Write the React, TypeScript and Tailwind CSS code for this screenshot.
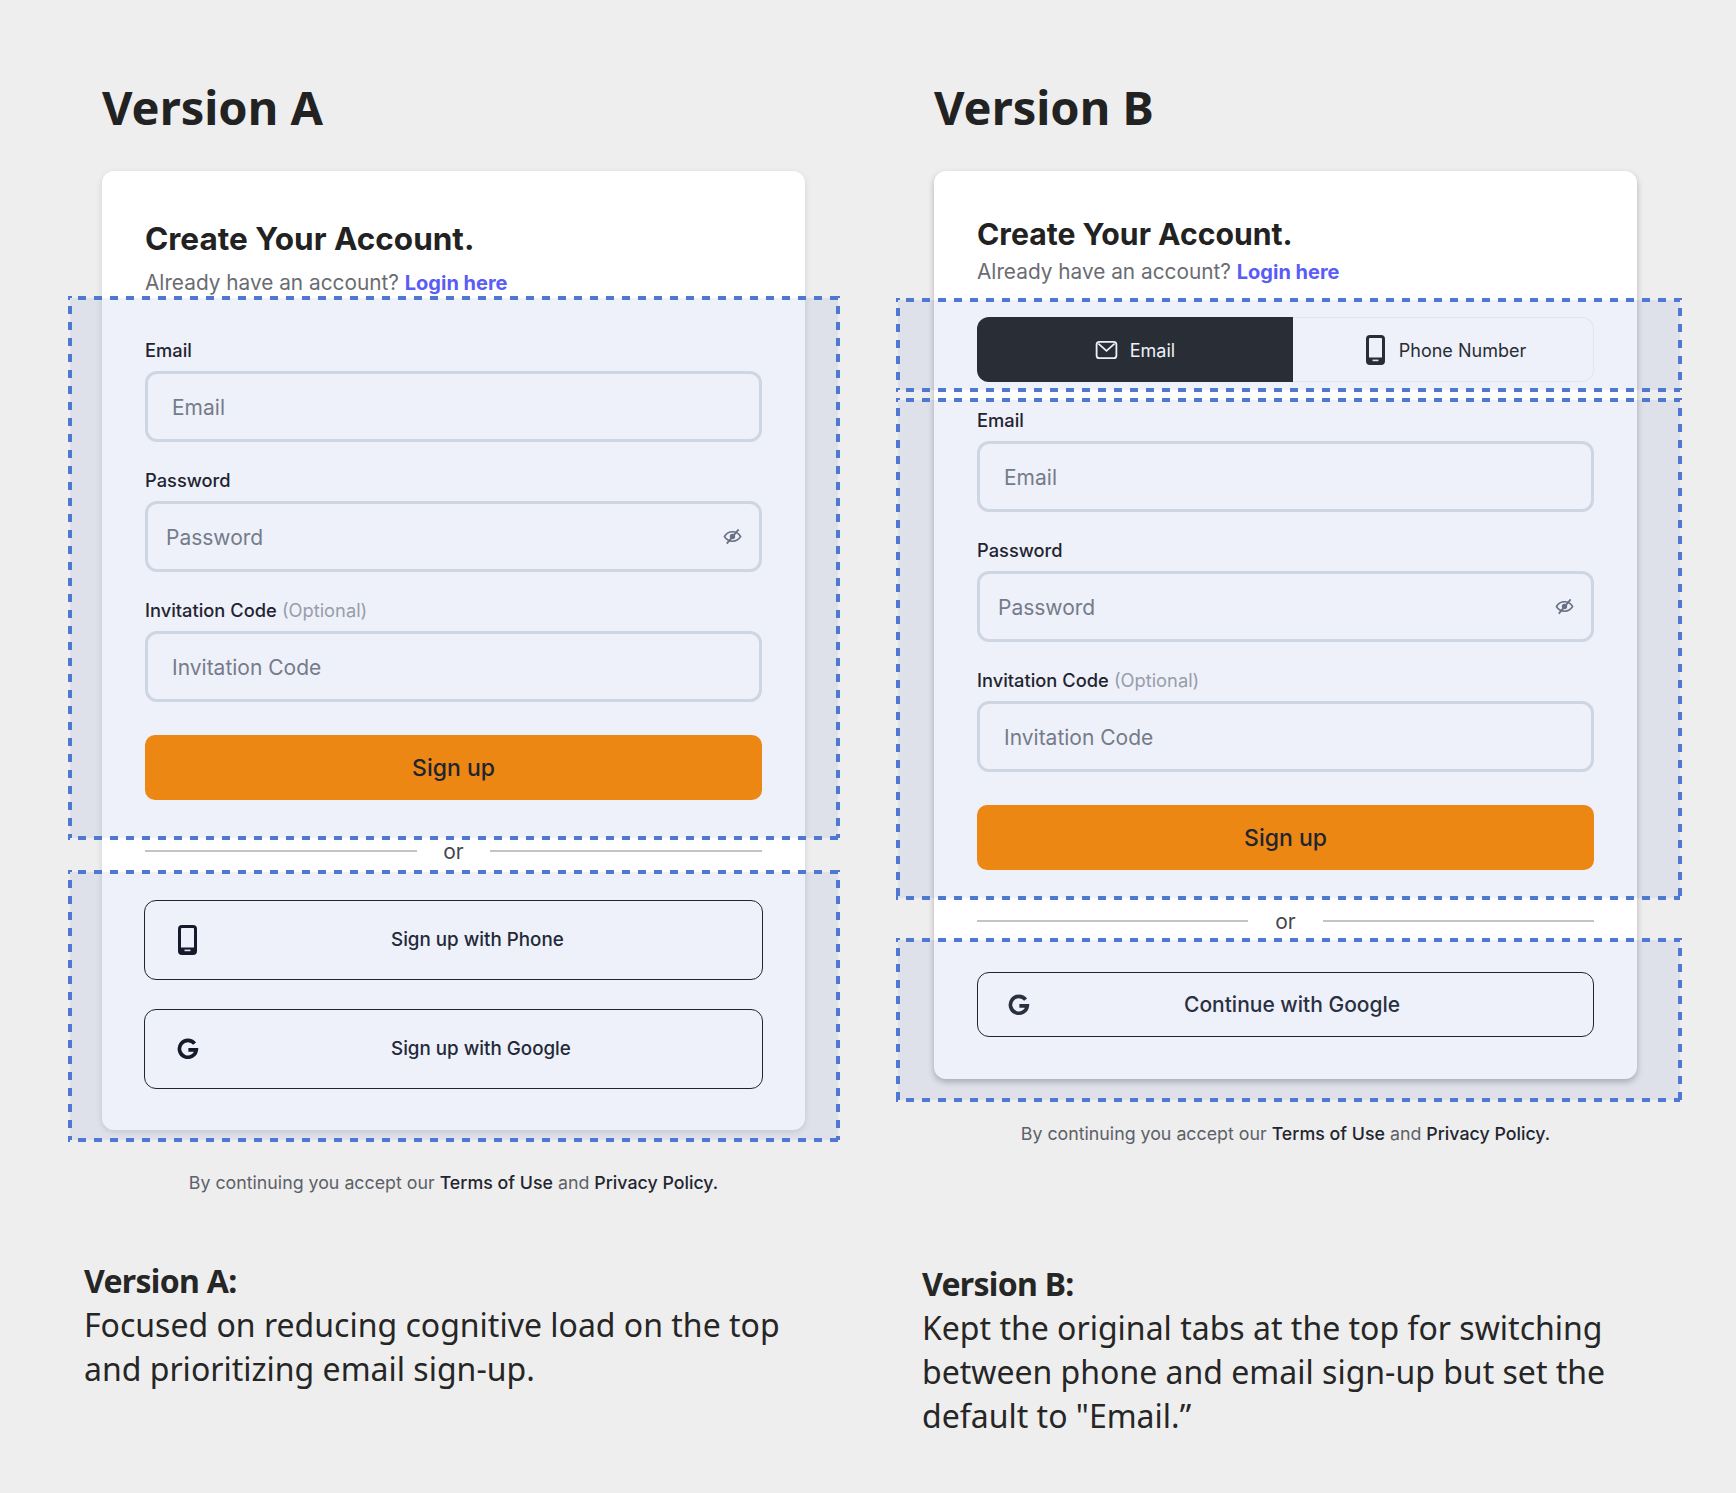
import React from 'react';

function Highlight({ className }: { className: string }) {
  return (
    <div className={`absolute pointer-events-none bg-[#2a4fb4]/[0.08] ${className}`}>
      <svg className="absolute inset-0 w-full h-full overflow-visible" stroke="#5078d2" strokeWidth="4" strokeDasharray="8 8" strokeDashoffset="6">
        <line x1="-2" y1="0" x2="100%" y2="0" />
        <line x1="-2" y1="100%" x2="100%" y2="100%" />
        <line x1="0" y1="-2" x2="0" y2="100%" />
        <line x1="100%" y1="-2" x2="100%" y2="100%" />
      </svg>
    </div>
  );
}

function PhoneIcon({ className }: { className?: string }) {
  return (
    <svg viewBox="0 0 19 30" className={className} fill="none">
      <rect x="1.5" y="1.5" width="16" height="27" rx="2.5" stroke="currentColor" strokeWidth="3" />
      <rect x="1.5" y="22.5" width="16" height="6" fill="currentColor" />
      <rect x="6.5" y="24.6" width="6" height="1.6" fill="#eef1f9" />
    </svg>
  );
}

function GoogleIcon({ className }: { className?: string }) {
  return (
    <svg viewBox="0 0 24 24" className={className} fill="none">
      <path d="M19.2 6.2A9.2 9.2 0 1 0 21 13H12.4" stroke="currentColor" strokeWidth="4" />
    </svg>
  );
}

function EyeOffIcon() {
  return (
    <svg viewBox="0 0 20 20" className="w-[19px] h-[19px] text-[#6f7380]" fill="none" stroke="currentColor">
      <path d="M1.5 10C3.5 6.8 6.5 5 10 5s6.5 1.8 8.5 5c-2 3.2-5 5-8.5 5s-6.5-1.8-8.5-5Z" strokeWidth="1.6" />
      <circle cx="10" cy="10" r="2.8" fill="currentColor" stroke="none" />
      <path d="M4 17.5 16.5 2.5" strokeWidth="1.8" />
    </svg>
  );
}

function MailIcon() {
  return (
    <svg viewBox="0 0 24 20" className="w-[23px] h-[18px]" fill="none" stroke="currentColor" strokeWidth="2">
      <rect x="1" y="1" width="22" height="18" rx="3" />
      <path d="M3 3l9 8 9-8" />
    </svg>
  );
}

function Field({ label, optional, placeholder, eye }: { label: string; optional?: boolean; placeholder: string; eye?: boolean }) {
  return (
    <div>
      <div className="text-[18.3px] leading-[22px] text-[#1f2126] font-medium">
        {label}
        {optional && <span className="text-[#a2a4ab] font-normal"> (Optional)</span>}
      </div>
      <div className={`mt-[10px] h-[71px] border-[3px] border-[#dde1e8] rounded-[12px] flex items-center justify-between text-[21px] text-[#7c7f88] ${eye ? 'pl-[18px] pr-[17px]' : 'pl-[24px]'}`}>
        <span className="pt-[2px]">{placeholder}</span>
        {eye && <EyeOffIcon />}
      </div>
    </div>
  );
}

function Form() {
  return (
    <>
      <div className="flex flex-col gap-[27px]">
        <Field label="Email" placeholder="Email" />
        <Field label="Password" placeholder="Password" eye />
        <Field label="Invitation Code" optional placeholder="Invitation Code" />
      </div>
      <div className="mt-[33px] h-[65px] pt-[1px] rounded-[10px] bg-[#fe8d07] flex items-center justify-center text-[23px] font-medium text-[#1f2126]">
        Sign up
      </div>
    </>
  );
}

function Divider({ gap }: { gap: string }) {
  return (
    <div className="flex items-center h-[22px]">
      <div className="flex-1 h-[2px] bg-[#c4c4c4] -mt-[2px]" />
      <div className={`text-center text-[21px] leading-[22px] text-[#44474e] ${gap}`}>or</div>
      <div className="flex-1 h-[2px] bg-[#c4c4c4] -mt-[2px]" />
    </div>
  );
}

function Footer({ className }: { className: string }) {
  return (
    <p className={`text-[17.8px] leading-[24px] text-[#5d6068] text-center ${className}`}>
      By continuing you accept our <span className="text-[#23262e] font-medium">Terms of Use</span> and{' '}
      <span className="text-[#23262e] font-medium">Privacy Policy.</span>
    </p>
  );
}

function Heading({ pt, gap, size }: { pt: string; gap: string; size: string }) {
  return (
    <div className={pt}>
      <h2 className={`${size} leading-[42px] font-bold text-[#222222]`}>Create Your Account.</h2>
      <p className={`${gap} text-[20.8px] leading-[28px] text-[#6a6c72]`}>
        Already have an account? <span className="text-[20px] text-[#5a5cf5] font-bold">Login here</span>
      </p>
    </div>
  );
}

function Summary({ title, lines, className }: { title: string; lines: string[]; className: string }) {
  return (
    <div className={`font-['Noto_Sans',sans-serif] text-[32px] leading-[44px] text-[#262626] ${className}`}>
      <div className="font-bold tracking-[-0.7px]">{title}</div>
      {lines.map((l) => (
        <div key={l}>{l}</div>
      ))}
    </div>
  );
}

export default function App() {
  return (
    <div className="w-[1736px] h-[1493px] bg-[#eeeeee] flex font-['Inter',sans-serif] overflow-hidden">
      {/* Version A */}
      <div className="w-[832px] pl-[102px] flex flex-col">
        <h1 className="mt-[74px] h-[66px] font-['Noto_Sans',sans-serif] font-bold text-[47px] leading-[66px] text-[#222222]">Version A</h1>
        <div className="relative mt-[31px] w-[703px] h-[959px] bg-white rounded-[12px] shadow-[0_2px_6px_rgba(0,0,0,0.12)] px-[43px]">
          <Heading pt="pt-[47px]" gap="mt-[9px]" size="text-[31.5px]" />
          <div className="mt-[42px]">
            <Form />
          </div>
          <div className="mt-[41px]">
            <Divider gap="w-[73px]" />
          </div>
          <div className="mt-[37px] -mx-[1px] flex flex-col gap-[29px]">
            <div className="h-[80px] border border-[#1f2229] rounded-[12px] flex items-center pl-[33px] text-[#14171f]">
              <PhoneIcon className="w-[19px] h-[30px]" />
              <span className="ml-[194px] text-[18.8px] font-medium text-[#23262e]">Sign up with Phone</span>
            </div>
            <div className="h-[80px] border border-[#1f2229] rounded-[12px] flex items-center pl-[32px] text-[#14171f]">
              <GoogleIcon className="w-[22px] h-[22px]" />
              <span className="ml-[192px] text-[18.8px] font-medium text-[#23262e]">Sign up with Google</span>
            </div>
          </div>
          <Highlight className="left-[-32px] right-[-33px] top-[127px] h-[540px]" />
          <Highlight className="left-[-32px] right-[-33px] top-[701px] h-[268px]" />
        </div>
        <Footer className="mt-[41px] w-[703px]" />
        <Summary
          className="mt-[64px] -ml-[18px] w-[720px]"
          title="Version A:"
          lines={['Focused on reducing cognitive load on the top', 'and prioritizing email sign-up.']}
        />
      </div>

      {/* Version B */}
      <div className="flex-1 pl-[102px] flex flex-col">
        <h1 className="mt-[74px] h-[66px] font-['Noto_Sans',sans-serif] font-bold text-[47px] leading-[66px] text-[#222222]">Version B</h1>
        <div className="relative mt-[31px] w-[703px] h-[908px] bg-white rounded-[12px] shadow-[0_3px_6px_rgba(0,0,0,0.25)] px-[43px]">
          <Heading pt="pt-[42px]" gap="mt-[3px]" size="text-[30.2px]" />
          <div className="mt-[31px] h-[65px] flex text-[18px]">
            <div className="w-[316px] pt-[1px] rounded-l-[12px] bg-[#2a2b2c] text-white flex items-center justify-center gap-[12px]">
              <MailIcon />
              <span>Email</span>
            </div>
            <div className="flex-1 pl-[6px] pt-[1px] rounded-r-[12px] border-y border-r border-[#f0f2f6] flex items-center justify-center gap-[14px] text-[#2a2b2c]">
              <PhoneIcon className="w-[19px] h-[30px]" />
              <span>Phone Number</span>
            </div>
          </div>
          <div className="mt-[27px]">
            <Form />
          </div>
          <div className="mt-[41px]">
            <Divider gap="w-[75px]" />
          </div>
          <div className="mt-[39px] h-[65px] border border-[#1f2229] rounded-[12px] flex items-center pl-[30px] text-[#2a2e37]">
            <GoogleIcon className="w-[22px] h-[22px]" />
            <span className="ml-[154px] text-[21px] font-medium">Continue with Google</span>
          </div>
          <Highlight className="left-[-36px] right-[-43px] top-[129px] h-[90px]" />
          <Highlight className="left-[-36px] right-[-43px] top-[229px] h-[498px]" />
          <Highlight className="left-[-36px] right-[-43px] top-[769px] h-[160px]" />
        </div>
        <Footer className="mt-[43px] w-[703px]" />
        <Summary
          className="mt-[116px] -ml-[12px] w-[780px]"
          title="Version B:"
          lines={['Kept the original tabs at the top for switching', 'between phone and email sign-up but set the', 'default to "Email.”']}
        />
      </div>
    </div>
  );
}
